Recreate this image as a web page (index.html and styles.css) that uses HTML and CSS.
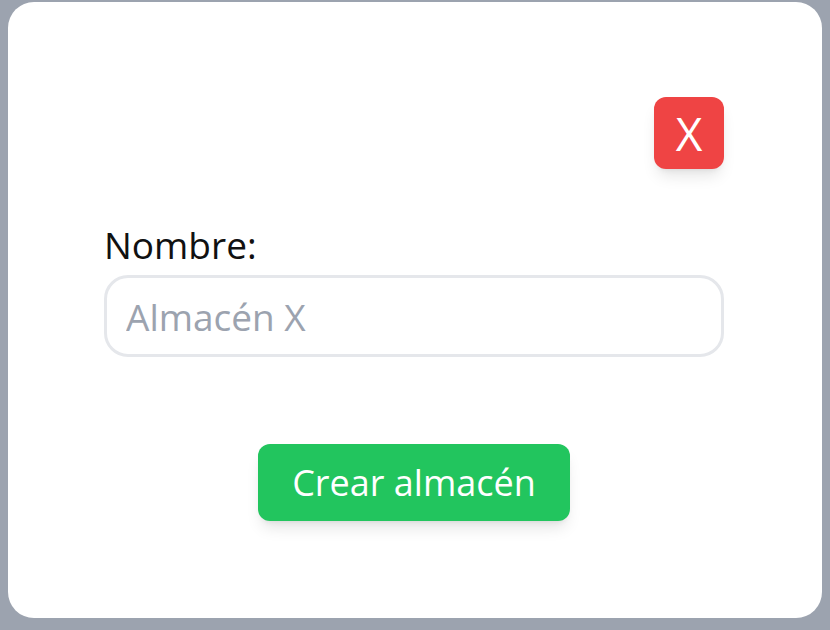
FILE: index.html
```html
<!DOCTYPE html>
<html lang="es">
<head>
<meta charset="utf-8">
<link rel="stylesheet" href="styles.css">
</head>
<body>
<div class="modal">
  <button class="close" type="button">X</button>
  <form class="form">
    <label class="label" for="nombre">Nombre:</label>
    <input class="input" id="nombre" type="text" placeholder="Almacén X">
    <button class="submit" type="button">Crear almacén</button>
  </form>
</div>
</body>
</html>
```
FILE: styles.css
```css
html, body {
  margin: 0;
  padding: 0;
}
body {
  background: #9ca3af;
  height: 630px;
  overflow: hidden;
  font-family: "Open Sans", "Liberation Sans", sans-serif;
}
.modal {
  box-sizing: border-box;
  width: 814px;
  height: 616px;
  margin: 2px 0 0 8px;
  background: #ffffff;
  border-radius: 26px;
  padding: 95px 98px 0 96px;
  display: flex;
  flex-direction: column;
}
.close {
  align-self: flex-end;
  width: 70px;
  height: 72px;
  margin: 0;
  border: none;
  border-radius: 12px;
  background: #ef4444;
  color: #ffffff;
  font-family: inherit;
  font-size: 46px;
  line-height: 1;
  padding: 0;
  box-shadow: 0 10px 15px -3px rgba(0,0,0,0.1), 0 4px 6px -4px rgba(0,0,0,0.1);
}
.form {
  display: flex;
  flex-direction: column;
  margin: 57px 0 0 0;
}
.label {
  font-size: 37px;
  line-height: 38px;
  color: #111111;
}
.input {
  box-sizing: border-box;
  margin: 11px 0 0 0;
  width: 620px;
  height: 82px;
  border: 3px solid #e5e7eb;
  border-radius: 24px;
  padding: 0 19px;
  font-family: inherit;
  font-size: 37px;
  color: #111111;
  outline: none;
}
.input::placeholder {
  color: #9ca3af;
}
.submit {
  align-self: center;
  margin: 87px 0 0 0;
  width: 312px;
  height: 77px;
  border: none;
  border-radius: 12px;
  background: #22c55e;
  color: #ffffff;
  font-family: inherit;
  font-size: 36px;
  padding: 0;
  box-shadow: 0 10px 15px -3px rgba(0,0,0,0.1), 0 4px 6px -4px rgba(0,0,0,0.1);
}
```
